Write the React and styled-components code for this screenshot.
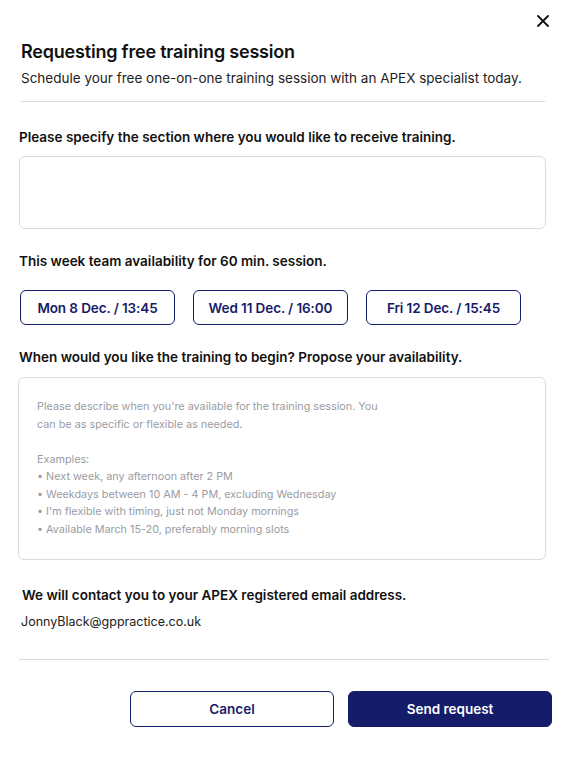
import React from "react";
import styled, { createGlobalStyle } from "styled-components";

const GlobalStyle = createGlobalStyle`
  html, body { margin: 0; padding: 0; background: #fff; }
  body { font-family: Inter, "Noto Sans", sans-serif; color: #111; }
  * { box-sizing: border-box; }
`;

const NAVY = "#151c6a";

const Dialog = styled.div`
  width: 569px;
  height: 760px;
  padding: 12px 17px 0 18px;
  display: flex;
  flex-direction: column;
`;

const TopBar = styled.div`
  display: flex;
  justify-content: flex-end;
  height: 18px;
`;

const CloseButton = styled.button`
  background: none;
  border: none;
  padding: 0;
  width: 18px;
  height: 18px;
  display: flex;
  align-items: center;
  justify-content: center;
  cursor: pointer;
  color: #111;
`;

const Header = styled.div`
  padding: 10px 0 0 3px;
`;

const Title = styled.h2`
  margin: 0;
  font-size: 18px;
  font-weight: 600;
  letter-spacing: -0.2px;
  line-height: 24px;
`;

const Subtitle = styled.p`
  margin: 5px 0 0;
  font-size: 13.5px;
  color: #222;
  line-height: 18px;
`;

const Divider = styled.hr`
  border: none;
  border-top: 1px solid #d9d9d9;
  margin: ${(p) => p.$margin || "0"};
`;

const Label = styled.div`
  font-size: 13.5px;
  font-weight: 600;
  line-height: 18px;
  padding-left: ${(p) => p.$indent || "1px"};
  margin: ${(p) => p.$margin || "0"};
`;

const TextBox = styled.div`
  border: 1px solid #dcdcdc;
  border-radius: 6px;
  height: ${(p) => p.$height}px;
  margin: ${(p) => p.$margin || "0"};
  padding: 20px 18px;
  background: #fff;
`;

const Placeholder = styled.div`
  font-size: 10.8px;
  line-height: 17.5px;
  color: #9a9ca3;
  white-space: pre-line;
  max-width: 345px;
`;

const SlotRow = styled.div`
  display: flex;
  gap: 18px;
  padding-left: 2px;
  margin-top: 20px;
`;

const SlotButton = styled.button`
  width: 155px;
  height: 35px;
  border: 1px solid ${NAVY};
  border-radius: 6px;
  background: #fff;
  color: ${NAVY};
  font-family: inherit;
  font-size: 13.5px;
  font-weight: 600;
  letter-spacing: -0.1px;
  cursor: pointer;
`;

const Email = styled.div`
  font-size: 12.5px;
  line-height: 18px;
  padding-left: 3px;
  margin-top: 9px;
  color: #222;
`;

const Actions = styled.div`
  display: flex;
  justify-content: flex-end;
  gap: 14px;
  margin-top: 31px;
`;

const ActionButton = styled.button`
  width: 204px;
  height: 36px;
  border-radius: 6px;
  border: 1px solid ${NAVY};
  background: ${(p) => (p.$primary ? NAVY : "#fff")};
  color: ${(p) => (p.$primary ? "#fff" : NAVY)};
  font-family: inherit;
  font-size: 13.5px;
  font-weight: 600;
  cursor: pointer;
`;

const slots = ["Mon 8 Dec. / 13:45", "Wed 11 Dec. / 16:00", "Fri 12 Dec. / 15:45"];

const placeholderText = `Please describe when you're available for the training session. You can be as specific or flexible as needed.

Examples:
• Next week, any afternoon after 2 PM
• Weekdays between 10 AM - 4 PM, excluding Wednesday
• I'm flexible with timing, just not Monday mornings
• Available March 15-20, preferably morning slots`;

export default function App() {
  return (
    <>
      <GlobalStyle />
      <Dialog>
        <TopBar>
          <CloseButton aria-label="Close">
            <svg width="12" height="12" viewBox="0 0 12 12" fill="none" stroke="currentColor" strokeWidth="1.8" strokeLinecap="round">
              <path d="M1 1l10 10M11 1L1 11" />
            </svg>
          </CloseButton>
        </TopBar>
        <Header>
          <Title>Requesting free training session</Title>
          <Subtitle>Schedule your free one-on-one training session with an APEX specialist today.</Subtitle>
        </Header>
        <Divider $margin="14px 7px 0 3px" />

        <Label $margin="26px 0 0">Please specify the section where you would like to receive training.</Label>
        <TextBox $height={73} $margin="10px 6px 0 1px" />

        <Label $margin="23px 0 0">This week team availability for 60 min. session.</Label>
        <SlotRow>
          {slots.map((s) => (
            <SlotButton key={s}>{s}</SlotButton>
          ))}
        </SlotRow>

        <Label $margin="23px 0 0">When would you like the training to begin? Propose your availability.</Label>
        <TextBox $height={183} $margin="11px 6px 0 0">
          <Placeholder>{placeholderText}</Placeholder>
        </TextBox>

        <Label $indent="4px" $margin="26px 0 0">We will contact you to your APEX registered email address.</Label>
        <Email>JonnyBlack@gppractice.co.uk</Email>
        <Divider $margin="28px 3px 0 1px" />

        <Actions>
          <ActionButton>Cancel</ActionButton>
          <ActionButton $primary>Send request</ActionButton>
        </Actions>
      </Dialog>
    </>
  );
}
